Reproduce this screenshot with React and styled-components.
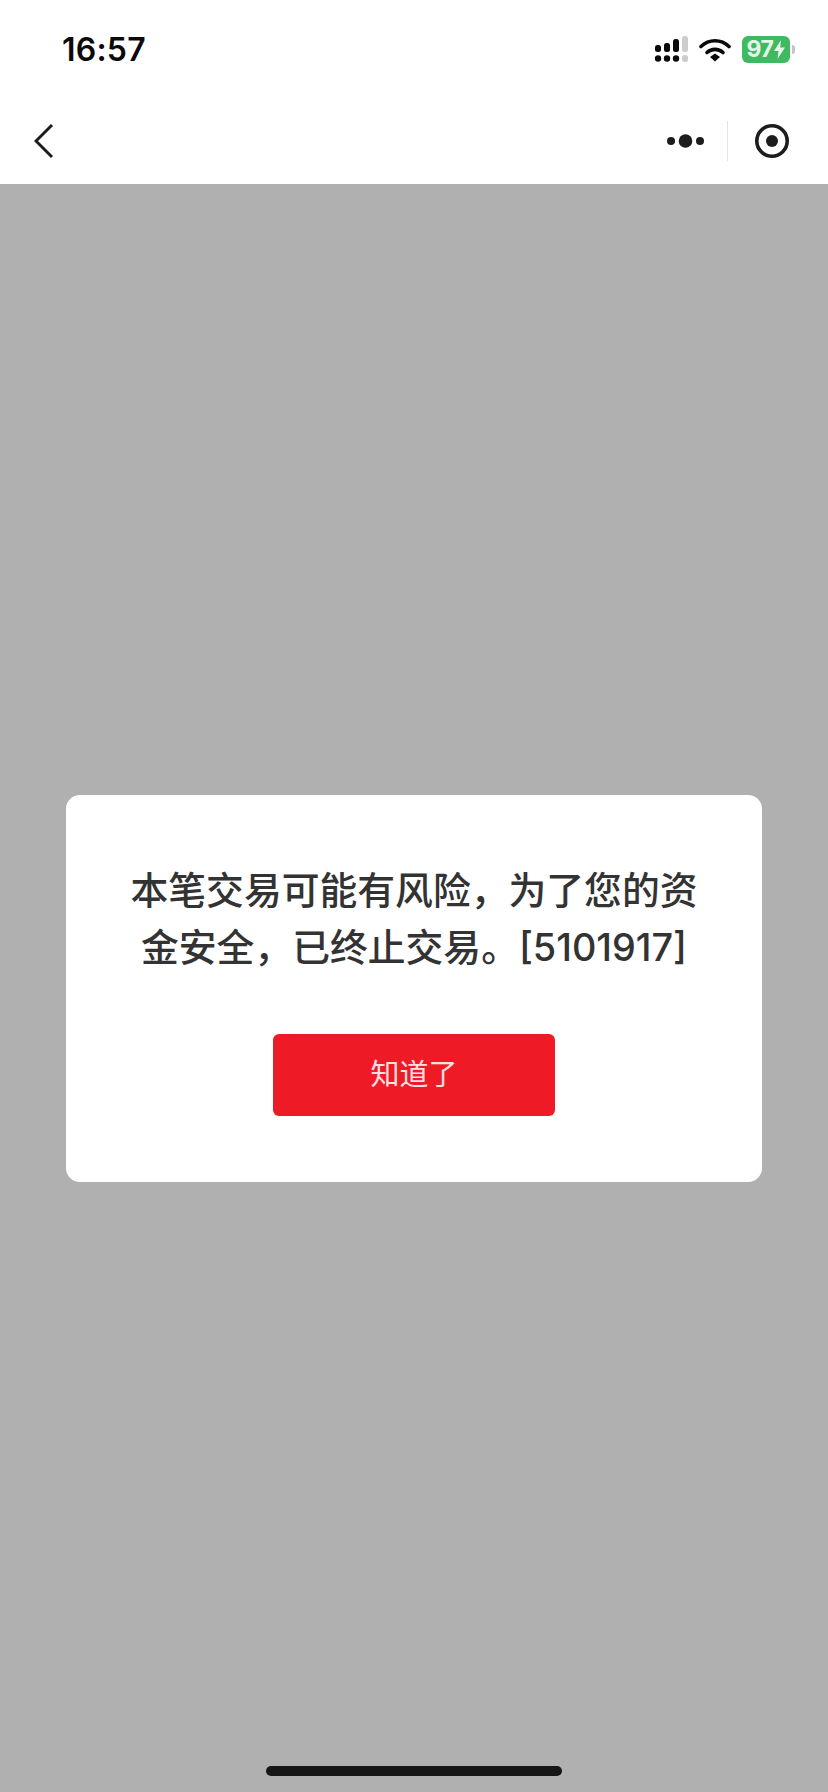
import React from 'react';
import styled, { createGlobalStyle } from 'styled-components';

const GlobalStyle = createGlobalStyle`
	html, body { margin: 0; padding: 0; background: #b0b0b0; }
	#root { min-height: 100vh; }
`;

const Page = styled.div`
	position: relative;
	display: flex;
	flex-direction: column;
	width: 828px;
	height: 1792px;
	overflow: hidden;
	background: #b0b0b0;
	font-family: Inter, "Noto Sans CJK SC", sans-serif;
`;

const Header = styled.header`
	background: #fff;
	height: 184px;
	flex: none;
`;

const StatusBar = styled.div`
	display: flex;
	align-items: center;
	justify-content: space-between;
	height: 98px;
	padding: 0 38px 0 62px;
	box-sizing: border-box;
`;

const Time = styled.span`
	font-size: 32px;
	font-weight: 600;
	letter-spacing: 0.2px;
	color: #0a0a0a;
`;

const StatusIcons = styled.div`
	display: flex;
	align-items: center;
	gap: 11px;
`;

const Battery = styled.div`
	position: relative;
	display: flex;
	align-items: center;
	justify-content: center;
	gap: 1px;
	width: 48px;
	height: 27px;
	border-radius: 6px;
	background: #3ebb60;
	color: #e4f7e8;
	font-size: 23px;
	font-weight: 700;
	letter-spacing: -0.5px;
	&::after {
		content: '';
		position: absolute;
		left: 50px;
		top: 9px;
		width: 3px;
		height: 9px;
		border-radius: 0 3px 3px 0;
		background: #c4c4c4;
	}
`;

const NavBar = styled.nav`
	display: flex;
	align-items: center;
	justify-content: space-between;
	height: 86px;
	padding: 0 38px 0 34px;
	box-sizing: border-box;
`;

const Capsule = styled.div`
	display: flex;
	align-items: center;
`;

const Divider = styled.span`
	width: 1px;
	height: 40px;
	margin: 0 26px 0 22px;
	background: #e4e4e4;
`;

const Body = styled.main`
	flex: 1;
	display: flex;
	align-items: center;
	justify-content: center;
`;

const Dialog = styled.section`
	display: flex;
	flex-direction: column;
	align-items: center;
	width: 696px;
	padding: 67px 56px 65px;
	box-sizing: border-box;
	border-radius: 14px;
	background: #fff;
`;

const Message = styled.p`
	margin: 0;
	width: 100%;
	font-size: 37.8px;
	font-weight: 500;
	line-height: 57px;
	text-align: center;
	color: #333;
`;

const Confirm = styled.button`
	width: 282px;
	height: 82px;
	margin-top: 58px;
	margin-bottom: 1px;
	padding: 0 0 6px;
	border: 0;
	border-radius: 6px;
	background: #ee1a26;
	color: #fde0e0;
	font-family: inherit;
	font-size: 29px;
`;

const HomeIndicator = styled.div`
	position: absolute;
	left: 266px;
	bottom: 16px;
	width: 296px;
	height: 10px;
	border-radius: 5px;
	background: #161616;
`;

function SignalIcon() {
	return (
		<svg width="33" height="26" viewBox="0 0 33 26">
			<g fill="#0a0a0a">
				<rect x="0" y="9" width="6" height="7" rx="2.5" />
				<rect x="9" y="7" width="6" height="9" rx="2.5" />
				<rect x="18" y="3" width="6" height="13" rx="2.5" />
				<circle cx="3" cy="22.5" r="3.2" />
				<circle cx="12" cy="22.5" r="3.2" />
				<circle cx="21" cy="22.5" r="3.2" />
			</g>
			<g fill="#cdcdcd">
				<rect x="27" y="0" width="6" height="16" rx="2.5" />
				<rect x="27" y="19" width="6" height="7" rx="2.5" />
			</g>
		</svg>
	);
}

function WifiIcon() {
	return (
		<svg width="32" height="25" viewBox="0 0 32 25">
			<path d="M2 9.5C10 1.8 22 1.8 30 9.5" fill="none" stroke="#0a0a0a" strokeWidth="3.6" strokeLinecap="round" />
			<path d="M8 15.5C12.5 11.3 19.5 11.3 24 15.5" fill="none" stroke="#0a0a0a" strokeWidth="3.6" strokeLinecap="round" />
			<path d="M11 20L16 16.5L21 20L16 24.5Z" fill="#0a0a0a" />
		</svg>
	);
}

function BoltIcon() {
	return (
		<svg width="11" height="19" viewBox="0 0 11 19">
			<path d="M7 0L0 11H4.5L3.5 19L11 7.5H6.2Z" fill="#e4f7e8" />
		</svg>
	);
}

function BackIcon() {
	return (
		<svg width="20" height="36" viewBox="0 0 20 36">
			<path d="M18 2L2 18L18 34" fill="none" stroke="#1c1c1c" strokeWidth="3" />
		</svg>
	);
}

function MoreIcon() {
	return (
		<svg width="38" height="16" viewBox="0 0 38 16">
			<circle cx="4" cy="8" r="4" fill="#1c1c1c" />
			<circle cx="18.5" cy="8" r="6.8" fill="#1c1c1c" />
			<circle cx="33" cy="8" r="4" fill="#1c1c1c" />
		</svg>
	);
}

function CloseIcon() {
	return (
		<svg width="36" height="36" viewBox="0 0 36 36">
			<circle cx="18" cy="18" r="15.2" fill="none" stroke="#1c1c1c" strokeWidth="3.6" />
			<circle cx="18" cy="18" r="6" fill="#1c1c1c" />
		</svg>
	);
}

export default function App() {
	return (
		<>
			<GlobalStyle />
			<Page>
				<Header>
					<StatusBar>
						<Time>16:57</Time>
						<StatusIcons>
							<SignalIcon />
							<WifiIcon />
							<Battery>97<BoltIcon /></Battery>
						</StatusIcons>
					</StatusBar>
					<NavBar>
						<BackIcon />
						<Capsule>
							<MoreIcon />
							<Divider />
							<CloseIcon />
						</Capsule>
					</NavBar>
				</Header>
				<Body>
					<Dialog>
						<Message>本笔交易可能有风险，为了您的资金安全，已终止交易。[5101917]</Message>
						<Confirm>知道了</Confirm>
					</Dialog>
				</Body>
				<HomeIndicator />
			</Page>
		</>
	);
}
